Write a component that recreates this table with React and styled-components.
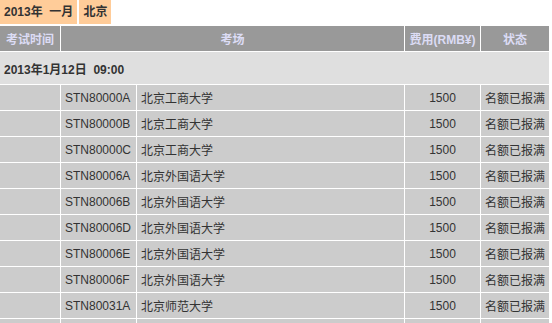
import styled, { createGlobalStyle } from "styled-components";

const rows = [
  ["STN80000A", "北京工商大学"],
  ["STN80000B", "北京工商大学"],
  ["STN80000C", "北京工商大学"],
  ["STN80006A", "北京外国语大学"],
  ["STN80006B", "北京外国语大学"],
  ["STN80006D", "北京外国语大学"],
  ["STN80006E", "北京外国语大学"],
  ["STN80006F", "北京外国语大学"],
  ["STN80031A", "北京师范大学"],
  ["", ""],
];

function App() {
  return (
    <>
      <GlobalStyle />
      <Tags>
        <Tag>2013年&nbsp;&nbsp;一月</Tag>
        <Tag>北京</Tag>
      </Tags>
      <Grid>
        <Head>考试时间</Head>
        <Head $span={2}>考场</Head>
        <Head>费用(RMB¥)</Head>
        <Head>状态</Head>
        <DateCell>2013年1月12日&nbsp;&nbsp;09:00</DateCell>
        {rows.map(([code, site], i) => (
          <Row key={i}>
            <Cell />
            <Cell>{code}</Cell>
            <Cell>{site}</Cell>
            <Cell $align="center">{code ? "1500" : ""}</Cell>
            <Cell>{code ? "名额已报满" : ""}</Cell>
          </Row>
        ))}
      </Grid>
    </>
  );
}

const GlobalStyle = createGlobalStyle`
  html, body {
    margin: 0;
    background: #fff;
    font-family: "Liberation Sans", "Noto Sans CJK SC", sans-serif;
    font-size: 12px;
    color: #333;
    overflow: hidden;
  }
`;

const Tags = styled.div`
  display: flex;
  gap: 2px;
  margin-bottom: 2px;
`;

const Tag = styled.div`
  height: 24px;
  line-height: 24px;
  padding: 0 4px;
  background: #ffcc99;
  font-weight: bold;
  color: #333;
  white-space: nowrap;
`;

const Grid = styled.div`
  display: grid;
  grid-template-columns: 60px 75px 267px 75px 68px;
  grid-template-rows: 25px 32px;
  grid-auto-rows: 25px;
  gap: 1px;
  width: 549px;
  background: #fff;
`;

const Head = styled.div`
  grid-column: span ${(p) => p.$span || 1};
  background: #999;
  color: #dcdcf5;
  font-weight: bold;
  display: flex;
  align-items: center;
  justify-content: center;
  white-space: nowrap;
`;

const DateCell = styled.div`
  grid-column: 1 / -1;
  background: #dfdfdf;
  font-weight: bold;
  display: flex;
  align-items: center;
  padding-left: 4px;
  color: #333;
`;

const Row = styled.div`
  display: contents;
`;

const Cell = styled.div`
  background: #ccc;
  display: flex;
  align-items: center;
  justify-content: ${(p) => (p.$align === "center" ? "center" : "flex-start")};
  padding: 0 4px;
  white-space: nowrap;
  color: #333;
`;

export default App;
